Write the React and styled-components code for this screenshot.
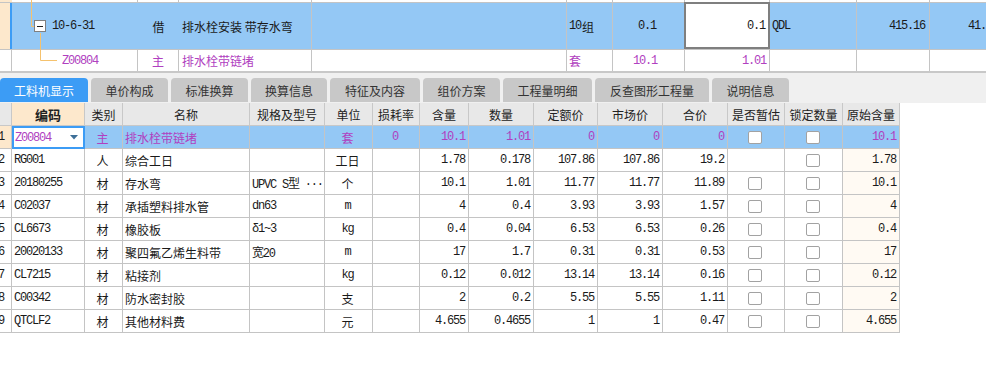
import React from "react";
import styled, { createGlobalStyle } from "styled-components";

const MONO = `"Liberation Mono", "Noto Sans CJK SC", monospace`;
const CJK = `"Noto Sans CJK SC", "Noto Sans", sans-serif`;
const PURPLE = "#b040c0";
const BLUE_ROW = "#94c8f5";
const BLUE = "#3c9cf5";
const PEACH = "#fde8cc";
const LINE = "#c4c4c4";
const TEXT = "#1a1a1a";

const GlobalStyle = createGlobalStyle`
  html, body { margin: 0; padding: 0; background: #fff; }
  body {
    font-family: ${CJK};
    font-size: 12px;
    color: ${TEXT};
    overflow: hidden;
    width: 986px;
    height: 388px;
  }
`;

/* ---------- top (parent item) area ---------- */
const TopArea = styled.div`
  position: relative;
  height: 73px;
  box-sizing: border-box;
  border-bottom: 2px solid #c8c8c8;
  overflow: hidden;
`;

const TopRow = styled.div`
  display: flex;
  box-sizing: border-box;
  height: ${(p) => p.$h}px;
  border-bottom: ${(p) => (p.$line ? `1px solid ${LINE}` : "none")};
  background: ${(p) => p.$bg || "#fff"};
`;

const TopCell = styled.div`
  box-sizing: border-box;
  flex: 0 0 ${(p) => p.$w}px;
  display: flex;
  align-items: center;
  justify-content: ${(p) =>
    p.$align === "right" ? "flex-end" : p.$align === "center" ? "center" : "flex-start"};
  padding-left: ${(p) => p.$pl || 0}px;
  padding-right: ${(p) => p.$pr || 0}px;
  border-right: ${(p) => (p.$noLine ? "none" : `1px solid ${LINE}`)};
  background: ${(p) => p.$bg || "transparent"};
  color: ${(p) => (p.$purple ? PURPLE : TEXT)};
  font-family: ${(p) => (p.$mono ? MONO : CJK)};
  letter-spacing: ${(p) => (p.$mono ? "-1.2px" : "0")};
  font-size: 12px;
  white-space: nowrap;
  overflow: hidden;
`;

const RowMark = styled(TopCell)`
  border-right: 2px solid ${BLUE};
  background: ${PEACH};
`;

const EditBox = styled(TopCell)`
  border: 2px solid #7f7f7f;
  background: #fff;
  margin-top: -1px;
  height: calc(100% + 1px);
`;

const MonoPart = styled.span`
  font-family: ${MONO};
  letter-spacing: -1.2px;
  margin-right: 1px;
`;

const MinusBox = styled.span`
  box-sizing: border-box;
  width: 12px;
  height: 12px;
  border: 1px solid #808080;
  background: #fff;
  display: inline-flex;
  align-items: center;
  justify-content: center;
  margin-right: 6px;
  flex: none;
  &::after {
    content: "";
    width: 6px;
    height: 1px;
    background: #222;
  }
`;

const TreeLines = styled.svg`
  position: absolute;
  left: 0;
  top: 0;
  pointer-events: none;
`;

/* ---------- tabs ---------- */
const TabBar = styled.div`
  display: flex;
  align-items: flex-end;
  gap: 3px;
  height: 30px;
  box-sizing: border-box;
  padding-bottom: 1px;
  background: #f0f0f0;
`;

const Tab = styled.div`
  box-sizing: border-box;
  flex: 0 0 ${(p) => p.$w}px;
  height: 24px;
  display: flex;
  align-items: center;
  justify-content: center;
  border-radius: 4px 4px 0 0;
  background: ${(p) => (p.$active ? BLUE : "#c8c8c8")};
  color: ${(p) => (p.$active ? "#fff" : "#333")};
  font-size: 12px;
  font-family: ${CJK};
`;

/* ---------- main grid ---------- */
const Grid = styled.div`
  display: grid;
  grid-template-columns: 12px 73px 38px 127px 75px 48px 47px 49px 65px 64px 65px 65px 57px 58px 57px;
  grid-auto-rows: 23px;
  width: 900px;
`;

const Cell = styled.div`
  box-sizing: border-box;
  border-right: 1px solid ${LINE};
  border-bottom: 1px solid ${LINE};
  display: flex;
  align-items: center;
  justify-content: ${(p) =>
    p.$align === "right" ? "flex-end" : p.$align === "center" ? "center" : "flex-start"};
  padding: 0 ${(p) => (p.$align === "right" ? 3 : 2)}px 0 ${(p) => (p.$align === "left" ? 2 : 0)}px;
  overflow: hidden;
  white-space: nowrap;
  background: ${(p) => (p.$sel ? BLUE_ROW : p.$bg || "#fff")};
  color: ${(p) => (p.$purple ? PURPLE : TEXT)};
  font-family: ${(p) => (p.$mono ? MONO : CJK)};
  letter-spacing: ${(p) => (p.$mono ? "-1.2px" : "0")};
  font-size: 12px;
`;

const HeadCell = styled.div`
  box-sizing: border-box;
  border-right: 1px solid #c8c8c8;
  border-bottom: 1px solid #c8c8c8;
  display: flex;
  align-items: center;
  justify-content: center;
  background: ${(p) => (p.$key ? PEACH : "#e8e8e8")};
  font-weight: ${(p) => (p.$key ? 700 : 400)};
  font-size: ${(p) => (p.$key ? 13 : 12)}px;
  color: #222;
  font-family: ${CJK};
  white-space: nowrap;
  overflow: hidden;
`;

const NumCell = styled.div`
  box-sizing: border-box;
  border-right: 1px solid ${LINE};
  border-bottom: 1px solid ${LINE};
  background: ${(p) => (p.$sel ? PEACH : "#fff")};
  display: flex;
  align-items: center;
  overflow: hidden;
  font-family: ${MONO};
  letter-spacing: -1.2px;
  font-size: 12px;
  color: ${TEXT};
  & > span {
    margin-left: -2px;
  }
`;

const CodeEdit = styled.div`
  box-sizing: border-box;
  border: 2px solid ${BLUE};
  background: #fff;
  display: flex;
  align-items: center;
  justify-content: space-between;
  padding: 0 5px 0 1px;
  font-family: ${MONO};
  letter-spacing: -1.2px;
  font-size: 12px;
  color: ${PURPLE};
`;

const Caret = styled.svg`
  flex: none;
`;

const Check = styled.span`
  box-sizing: border-box;
  width: 14px;
  height: 13px;
  border: 1px solid #a2a2a2;
  border-radius: 2px;
  background: #fff;
`;

const tabs = [
  ["工料机显示", 88],
  ["单价构成", 77],
  ["标准换算", 77],
  ["换算信息", 76],
  ["特征及内容", 90],
  ["组价方案", 77],
  ["工程量明细", 89],
  ["反查图形工程量", 114],
  ["说明信息", 77],
];

const headers = [
  "",
  "编码",
  "类别",
  "名称",
  "规格及型号",
  "单位",
  "损耗率",
  "含量",
  "数量",
  "定额价",
  "市场价",
  "合价",
  "是否暂估",
  "锁定数量",
  "原始含量",
];

const rows = [
  { code: "Z00804", type: "主", name: "排水栓带链堵", spec: "", unit: "套", loss: "0", qty: "10.1", num: "1.01", quota: "0", market: "0", total: "0", c1: true, c2: true, orig: "10.1", sel: true },
  { code: "RG001", type: "人", name: "综合工日", spec: "", unit: "工日", qty: "1.78", num: "0.178", quota: "107.86", market: "107.86", total: "19.2", c1: false, c2: true, orig: "1.78" },
  { code: "20180255", type: "材", name: "存水弯", spec: "UPVC S型 ···", unit: "个", qty: "10.1", num: "1.01", quota: "11.77", market: "11.77", total: "11.89", c1: true, c2: true, orig: "10.1" },
  { code: "C02037", type: "材", name: "承插塑料排水管", spec: "dn63", unit: "m", qty: "4", num: "0.4", quota: "3.93", market: "3.93", total: "1.57", c1: true, c2: true, orig: "4" },
  { code: "CL6673", type: "材", name: "橡胶板", spec: "δ1~3", unit: "kg", qty: "0.4", num: "0.04", quota: "6.53", market: "6.53", total: "0.26", c1: true, c2: true, orig: "0.4" },
  { code: "20020133", type: "材", name: "聚四氟乙烯生料带", spec: "宽20", unit: "m", qty: "17", num: "1.7", quota: "0.31", market: "0.31", total: "0.53", c1: true, c2: true, orig: "17" },
  { code: "CL7215", type: "材", name: "粘接剂", spec: "", unit: "kg", qty: "0.12", num: "0.012", quota: "13.14", market: "13.14", total: "0.16", c1: true, c2: true, orig: "0.12" },
  { code: "C00342", type: "材", name: "防水密封胶", spec: "", unit: "支", qty: "2", num: "0.2", quota: "5.55", market: "5.55", total: "1.11", c1: true, c2: true, orig: "2" },
  { code: "QTCLF2", type: "材", name: "其他材料费", spec: "", unit: "元", qty: "4.655", num: "0.4655", quota: "1", market: "1", total: "0.47", c1: true, c2: true, orig: "4.655" },
];

const isLatin = (s) => /^[\x00-\x7f]*$/.test(s);

function TopSection() {
  return (
    <TopArea>
      <TopRow $h={3} $line>
        <TopCell $w={12} $bg={PEACH} $noLine />
        <TopCell $w={126} />
        <TopCell $w={41} />
        <TopCell $w={133} />
        <TopCell $w={255} />
        <TopCell $w={46} />
        <TopCell $w={72} />
        <TopCell $w={85} />
        <TopCell $w={87} />
        <TopCell $w={73} />
        <TopCell $w={80} $noLine />
      </TopRow>
      <TopRow $h={47} $line $bg={BLUE_ROW}>
        <RowMark $w={12} />
        <TopCell $w={126} $noLine $pl={22} $mono>
          <MinusBox />
          10-6-31
        </TopCell>
        <TopCell $w={41} $noLine $align="center">借</TopCell>
        <TopCell $w={133} $pl={3}>排水栓安装 带存水弯</TopCell>
        <TopCell $w={255} />
        <TopCell $w={46} $pl={2}>
          <MonoPart>10</MonoPart>组
        </TopCell>
        <TopCell $w={71} $noLine $align="right" $pr={28} $mono>0.1</TopCell>
        <EditBox $w={86} $align="right" $pr={3} $mono>0.1</EditBox>
        <TopCell $w={87} $pl={2} $mono>QDL</TopCell>
        <TopCell $w={73} $align="right" $pr={4} $mono>415.16</TopCell>
        <TopCell $w={80} $noLine $pl={38} $mono>41.</TopCell>
      </TopRow>
      <TopRow $h={21}>
        <TopCell $w={12} />
        <TopCell $w={126} $pl={50} $mono $purple>Z00804</TopCell>
        <TopCell $w={41} $align="center" $purple>主</TopCell>
        <TopCell $w={133} $pl={3} $purple>排水栓带链堵</TopCell>
        <TopCell $w={255} />
        <TopCell $w={46} $pl={2} $purple>套</TopCell>
        <TopCell $w={72} $align="right" $pr={27} $mono $purple>10.1</TopCell>
        <TopCell $w={85} $align="right" $pr={3} $mono $purple>1.01</TopCell>
        <TopCell $w={87} />
        <TopCell $w={73} />
        <TopCell $w={80} $noLine />
      </TopRow>
      <TreeLines width="70" height="71" viewBox="0 0 70 71">
        <path d="M31.5 0 V26.5 H34" stroke="#f5c26e" strokeWidth="1" fill="none" />
        <path d="M40.5 33 V60.5 H57" stroke="#f5c26e" strokeWidth="1" fill="none" />
      </TreeLines>
    </TopArea>
  );
}

function DataRow({ r, i }) {
  const p = !!r.sel;
  return (
    <>
      <NumCell $sel={p}>
        <span>{i + 1}</span>
      </NumCell>
      {p ? (
        <CodeEdit>
          <span>{r.code}</span>
          <Caret width="8" height="5" viewBox="0 0 8 5">
            <path d="M0 0 H8 L4 4.5 Z" fill="#3d6f98" />
          </Caret>
        </CodeEdit>
      ) : (
        <Cell $align="left" $mono>{r.code}</Cell>
      )}
      <Cell $sel={p} $purple={p} $align="center">{r.type}</Cell>
      <Cell $sel={p} $purple={p} $align="left">{r.name}</Cell>
      <Cell $sel={p} $align="left" $mono>{r.spec}</Cell>
      <Cell $sel={p} $purple={p} $align="center" $mono={isLatin(r.unit)}>{r.unit}</Cell>
      <Cell $sel={p} $purple={p} $align="center" $mono>{r.loss || ""}</Cell>
      <Cell $sel={p} $purple={p} $align="right" $mono>{r.qty}</Cell>
      <Cell $sel={p} $purple={p} $align="right" $mono>{r.num}</Cell>
      <Cell $sel={p} $purple={p} $align="right" $mono>{r.quota}</Cell>
      <Cell $sel={p} $purple={p} $align="right" $mono>{r.market}</Cell>
      <Cell $sel={p} $purple={p} $align="right" $mono>{r.total}</Cell>
      <Cell $sel={p} $align="center">{r.c1 && <Check />}</Cell>
      <Cell $sel={p} $align="center">{r.c2 && <Check />}</Cell>
      <Cell $sel={p} $purple={p} $align="right" $mono $bg="#fffaf3">{r.orig}</Cell>
    </>
  );
}

export default function App() {
  return (
    <>
      <GlobalStyle />
      <TopSection />
      <TabBar>
        {tabs.map(([t, w], i) => (
          <Tab key={t} $w={w} $active={i === 0}>
            {t}
          </Tab>
        ))}
      </TabBar>
      <Grid>
        {headers.map((h, i) => (
          <HeadCell key={i} $key={h === "编码"}>
            {h}
          </HeadCell>
        ))}
        {rows.map((r, i) => (
          <DataRow key={i} r={r} i={i} />
        ))}
      </Grid>
    </>
  );
}
